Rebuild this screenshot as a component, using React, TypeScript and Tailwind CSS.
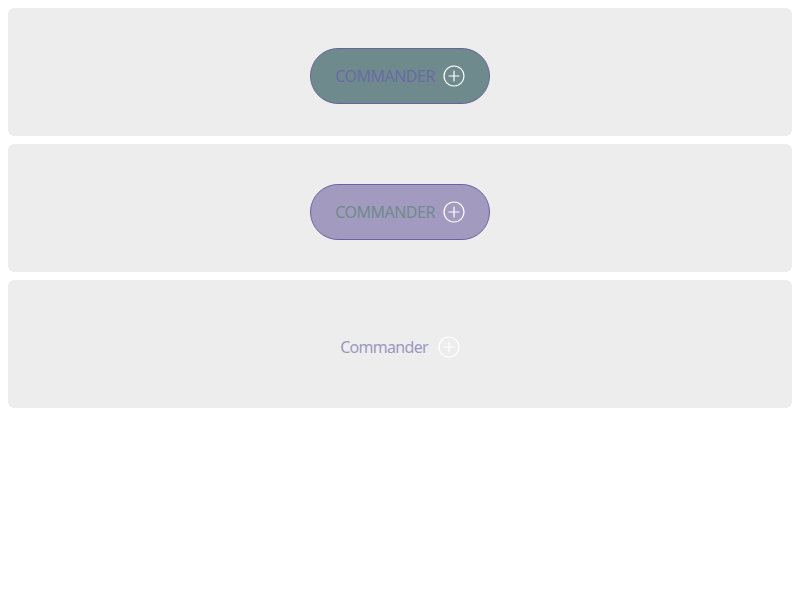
function PlusCircle({ className }: { className?: string }) {
  return (
    <svg width="22" height="22" viewBox="0 0 22 22" fill="none" className={className}>
      <circle cx="11" cy="11" r="10" stroke="currentColor" strokeWidth="1.2" />
      <path d="M11 6v10M6 11h10" stroke="currentColor" strokeWidth="1.2" strokeLinecap="round" />
    </svg>
  )
}

function Panel({ children }: { children: React.ReactNode }) {
  return (
    <div className="h-[128px] rounded-md bg-[#ededed] flex items-center justify-center">
      {children}
    </div>
  )
}

export default function App() {
  return (
    <div className="p-2 flex flex-col gap-2 font-['Noto_Sans',sans-serif]">
      <Panel>
        <button className="mt-2 w-[180px] h-[56px] rounded-full border border-[#6a63a0] bg-[#6f8a8c] flex items-center justify-center gap-2 text-[16px] tracking-[-0.5px] text-[#6a6aa6]">
          <span>COMMANDER</span>
          <PlusCircle className="text-white" />
        </button>
      </Panel>
      <Panel>
        <button className="mt-2 w-[180px] h-[56px] rounded-full border border-[#6a63a0] bg-[#a29bbf] flex items-center justify-center gap-2 text-[16px] tracking-[-0.5px] text-[#6f8a8c]">
          <span>COMMANDER</span>
          <PlusCircle className="text-white" />
        </button>
      </Panel>
      <Panel>
        <button className="flex items-center gap-2.5 text-[16px] tracking-[-0.7px] text-[#9c98c2] pt-1.5">
          <span>Commander</span>
          <PlusCircle className="text-white" />
        </button>
      </Panel>
    </div>
  )
}
